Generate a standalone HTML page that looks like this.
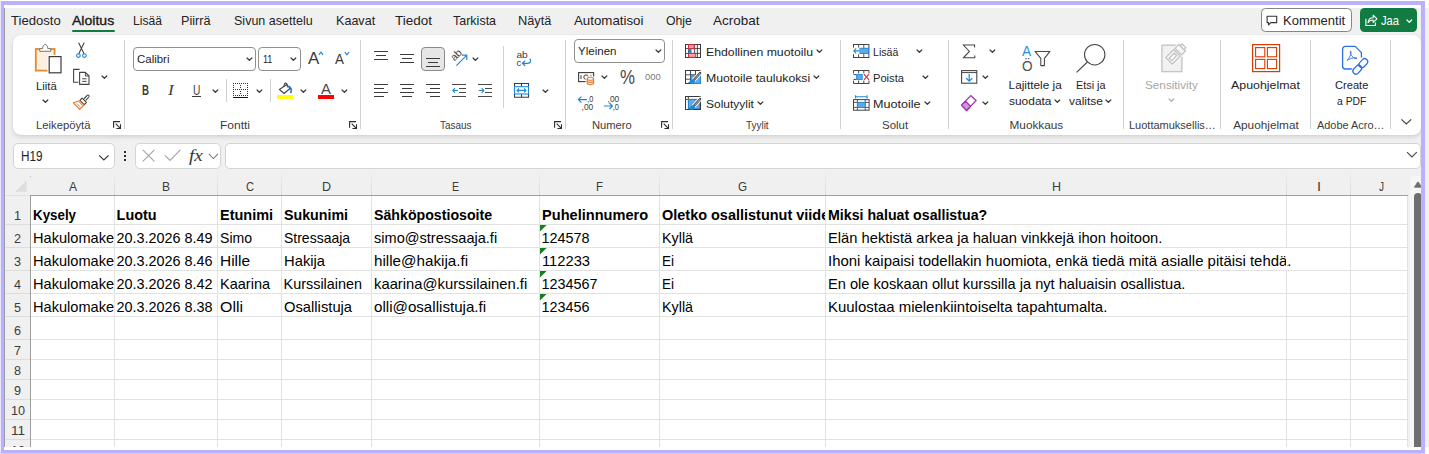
<!DOCTYPE html>
<html lang="fi"><head><meta charset="utf-8"><title>Excel</title>
<style>
html,body{margin:0;padding:0}
body{width:1429px;height:454px;overflow:hidden;background:#f0f0f0;position:relative;font-family:"Liberation Sans",sans-serif}
body div,body svg,body span{position:absolute}
.t{white-space:nowrap;transform-origin:0 0;display:block}
.i{overflow:visible}
</style></head><body>
<div style="left:0px;top:0px;width:1429px;height:8px;background:#fff"></div>
<div style="left:0px;top:447px;width:1429px;height:7px;background:#fff"></div>
<div style="left:0px;top:1px;width:1px;height:453px;background:#e9e6fd"></div>
<div style="left:4px;top:8px;width:1px;height:439px;background:#9c9ca6"></div>
<span class="t" style="left:10.60px;top:13px;font-size:13.3px;line-height:15px;color:#242424;transform:scaleX(0.9846);">Tiedosto</span>
<span class="t" style="left:72.20px;top:13px;font-size:13.3px;line-height:15px;color:#1b1b1b;transform:scaleX(1.0566);-webkit-text-stroke:0.35px #1b1b1b;">Aloitus</span>
<span class="t" style="left:133.00px;top:13px;font-size:13.3px;line-height:15px;color:#242424;transform:scaleX(0.9107);">Lisää</span>
<span class="t" style="left:181.00px;top:13px;font-size:13.3px;line-height:15px;color:#242424;transform:scaleX(0.9555);">Piirrä</span>
<span class="t" style="left:234.30px;top:13px;font-size:13.3px;line-height:15px;color:#242424;transform:scaleX(0.9417);">Sivun asettelu</span>
<span class="t" style="left:336.00px;top:13px;font-size:13.3px;line-height:15px;color:#242424;transform:scaleX(0.9455);">Kaavat</span>
<span class="t" style="left:395.40px;top:13px;font-size:13.3px;line-height:15px;color:#242424;transform:scaleX(1.0172);">Tiedot</span>
<span class="t" style="left:453.30px;top:13px;font-size:13.3px;line-height:15px;color:#242424;transform:scaleX(0.9403);">Tarkista</span>
<span class="t" style="left:518.00px;top:13px;font-size:13.3px;line-height:15px;color:#242424;transform:scaleX(0.9617);">Näytä</span>
<span class="t" style="left:574.00px;top:13px;font-size:13.3px;line-height:15px;color:#242424;">Automatisoi</span>
<span class="t" style="left:665.50px;top:13px;font-size:13.3px;line-height:15px;color:#242424;transform:scaleX(0.9214);">Ohje</span>
<span class="t" style="left:713.10px;top:13px;font-size:13.3px;line-height:15px;color:#242424;transform:scaleX(1.0126);">Acrobat</span>
<div style="left:72px;top:30px;width:42.5px;height:2px;background:#107c41;border-radius:1px"></div>
<div style="left:1261px;top:8px;width:91px;height:24px;background:#fff;border:1px solid #858585;border-radius:4.5px;box-sizing:border-box"></div>
<svg class="i" style="left:1266px;top:14.5px;" width="12" height="11" viewBox="0 0 12 11"><path d="M1.1 1.2 H10.7 V7.6 H4.8 L2.6 10 V7.6 H1.1 Z" fill="none" stroke="#333" stroke-width="1.1" stroke-linejoin="round"/></svg>
<span class="t" style="left:1282.80px;top:13px;font-size:13.3px;line-height:15px;color:#242424;transform:scaleX(0.9783);">Kommentit</span>
<div style="left:1360px;top:8px;width:57.2px;height:24px;background:#107c41;border-radius:4.5px"></div>
<svg class="i" style="left:1364.5px;top:13.5px;" width="13" height="12" viewBox="0 0 13 12"><path d="M0.9 4.8 V11.5 H10.4 V8.6" fill="none" stroke="#fff" stroke-width="1.1"/><path d="M3 8.6 C3.4 5.4 5.4 3.7 8.2 3.7 V1.2 L12 4.9 L8.2 8.4 V6 C5.8 6 4.2 6.8 3 8.6 Z" fill="none" stroke="#fff" stroke-width="1.05" stroke-linejoin="round"/></svg>
<span class="t" style="left:1381.30px;top:13px;font-size:13.3px;line-height:15px;color:#fff;transform:scaleX(0.8421);">Jaa</span>
<svg class="i" style="left:1406.4px;top:18.6px;" width="6.6" height="4.4" viewBox="0 0 6.6 4.4"><path d="M1 1 L3.3 3.4 L5.6 1" fill="none" stroke="#fff" stroke-width="1.3" stroke-linecap="round" stroke-linejoin="round"/></svg>
<div style="left:12.6px;top:35.3px;width:1408.6px;height:99.7px;background:#fff;border-radius:8px;box-shadow:0 2px 4px rgba(0,0,0,.13),0 0 1px rgba(0,0,0,.10)"></div>
<div style="left:124px;top:40px;width:1px;height:89px;background:#d1d1d1"></div>
<div style="left:360px;top:40px;width:1px;height:89px;background:#d1d1d1"></div>
<div style="left:565px;top:40px;width:1px;height:89px;background:#d1d1d1"></div>
<div style="left:672px;top:40px;width:1px;height:89px;background:#d1d1d1"></div>
<div style="left:840px;top:40px;width:1px;height:89px;background:#d1d1d1"></div>
<div style="left:948px;top:40px;width:1px;height:89px;background:#d1d1d1"></div>
<div style="left:1123px;top:40px;width:1px;height:89px;background:#d1d1d1"></div>
<div style="left:1220px;top:40px;width:1px;height:89px;background:#d1d1d1"></div>
<div style="left:1310px;top:40px;width:1px;height:89px;background:#d1d1d1"></div>
<div style="left:1390px;top:40px;width:1px;height:89px;background:#d1d1d1"></div>
<svg class="i" style="left:34px;top:43px;" width="29" height="32" viewBox="0 0 29 32"><rect x="1.8" y="6" width="18.8" height="21.6" fill="#fdf0e1" stroke="#e8892b" stroke-width="1.8"/>
<path d="M5.7 8.3 V5.6 H8.6 C8.6 3 9.8 1.5 11.2 1.5 C12.6 1.5 13.8 3 13.8 5.6 H16.7 V8.3 Z" fill="#fff" stroke="#777" stroke-width="1"/>
<rect x="13.4" y="11.8" width="15.4" height="19.8" fill="#fff"/>
<rect x="15.2" y="13.6" width="11.8" height="16.2" fill="#fff" stroke="#3b3b3b" stroke-width="1.2"/></svg>
<span class="t" style="left:35.80px;top:79px;font-size:11.8px;line-height:14px;color:#242424;transform:scaleX(0.9618);">Liitä</span>
<svg class="i" style="left:42.1px;top:99.35px;" width="6.8" height="4.3" viewBox="0 0 6.8 4.3"><path d="M1 1 L3.4 3.3 L5.8 1" fill="none" stroke="#3a3a3a" stroke-width="1.2" stroke-linecap="round" stroke-linejoin="round"/></svg>
<svg class="i" style="left:75px;top:42px;" width="13" height="18" viewBox="0 0 13 18"><path d="M3.8 1 L9 11.8 M9 1 L3.8 11.8" stroke="#444" stroke-width="1.1" fill="none" stroke-linecap="round"/><circle cx="3.4" cy="13.6" r="1.8" fill="none" stroke="#2188d8" stroke-width="1.1"/><circle cx="9.4" cy="13.6" r="1.8" fill="none" stroke="#2188d8" stroke-width="1.1"/></svg>
<svg class="i" style="left:72px;top:67px;" width="18" height="18" viewBox="0 0 18 18"><path d="M7.6 2.4 H1.6 V15.2 H6.4" fill="none" stroke="#444" stroke-width="1.1"/><path d="M7.6 5.4 H13.4 L17 9 V17.4 H7.6 Z" fill="#fff" stroke="#444" stroke-width="1.1" stroke-linejoin="round"/><path d="M13.4 5.4 V9 H17" fill="none" stroke="#444" stroke-width="1"/><path d="M10.2 11.8 H14.6 M10.2 14.4 H14.6" stroke="#444" stroke-width="1"/></svg>
<svg class="i" style="left:100.9px;top:75.25px;" width="6.8" height="4.3" viewBox="0 0 6.8 4.3"><path d="M1 1 L3.4 3.3 L5.8 1" fill="none" stroke="#3a3a3a" stroke-width="1.2" stroke-linecap="round" stroke-linejoin="round"/></svg>
<svg class="i" style="left:72px;top:93px;" width="19" height="18" viewBox="0 0 19 18"><path d="M11.8 6 L15.2 2.4 C16.2 1.4 17.8 2.8 16.8 4 L13.6 7.6" fill="#fff" stroke="#444" stroke-width="1.1"/><path d="M10 5.2 L14.4 9.4 L12.4 11.6 L8 7.4 Z" fill="#fff" stroke="#444" stroke-width="1.1" stroke-linejoin="round"/><path d="M7.6 7.8 L12 12 L7.6 16.4 L1.4 9.8 Z" fill="#fff" stroke="#e8772d" stroke-width="1.2" stroke-linejoin="round"/><path d="M4.6 10.4 L8.4 14.2 M7 8.8 L10.6 12.6" stroke="#e8772d" stroke-width="0.9"/></svg>
<span class="t" style="left:35.50px;top:118px;font-size:11.8px;line-height:14px;color:#3b3b3b;transform:scaleX(0.9547);">Leikepöytä</span>
<svg class="i" style="left:113px;top:121px;" width="9" height="9" viewBox="0 0 9 9"><path d="M0.6 6.7 V0.6 H7" fill="none" stroke="#2e2e2e" stroke-width="1.1"/><path d="M2.7 2.7 L7.3 7.3 M3.4 7.5 H7.5 V3.3" fill="none" stroke="#2e2e2e" stroke-width="1.1"/></svg>
<div style="left:133px;top:47px;width:123px;height:24px;background:#fff;border:1px solid #8f8f8f;border-radius:4px;box-sizing:border-box"></div>
<div style="left:258.3px;top:47px;width:42.6px;height:24px;background:#fff;border:1px solid #8f8f8f;border-radius:4px;box-sizing:border-box"></div>
<span class="t" style="left:137.20px;top:52px;font-size:11.8px;line-height:14px;color:#242424;transform:scaleX(0.9714);">Calibri</span>
<span class="t" style="left:262.60px;top:52px;font-size:11.8px;line-height:14px;color:#242424;transform:scaleX(0.7673);">11</span>
<svg class="i" style="left:245.7px;top:57.35px;" width="6.8" height="4.3" viewBox="0 0 6.8 4.3"><path d="M1 1 L3.4 3.3 L5.8 1" fill="none" stroke="#3a3a3a" stroke-width="1.2" stroke-linecap="round" stroke-linejoin="round"/></svg>
<svg class="i" style="left:290.4px;top:57.35px;" width="6.8" height="4.3" viewBox="0 0 6.8 4.3"><path d="M1 1 L3.4 3.3 L5.8 1" fill="none" stroke="#3a3a3a" stroke-width="1.2" stroke-linecap="round" stroke-linejoin="round"/></svg>
<span class="t" style="left:308.30px;top:48px;font-size:17.4px;line-height:20px;color:#3a3a3a;transform:scaleX(0.9720);">A</span>
<svg class="i" style="left:318.2px;top:51px;" width="6" height="5" viewBox="0 0 6 5"><path d="M0.8 3.9 L2.9 1.2 L5 3.9" fill="none" stroke="#2188d8" stroke-width="1.2"/></svg>
<span class="t" style="left:335.40px;top:52px;font-size:13.8px;line-height:15px;color:#3a3a3a;transform:scaleX(0.9730);">A</span>
<svg class="i" style="left:343.8px;top:51.2px;" width="6" height="5" viewBox="0 0 6 5"><path d="M0.8 1.2 L2.9 3.8 L5 1.2" fill="none" stroke="#2188d8" stroke-width="1.2"/></svg>
<span class="t" style="left:141.80px;top:82px;font-size:14.5px;line-height:16px;color:#3a3a3a;font-weight:700;transform:scaleX(0.6667);">B</span>
<span class="t" style="left:167.94px;top:81px;font-size:15.4px;line-height:17px;color:#3a3a3a;font-style:italic;font-family:'Liberation Serif',serif;transform:scaleX(1.1234);">I</span>
<span class="t" style="left:192.80px;top:82px;font-size:14px;line-height:16px;color:#444;transform:scaleX(0.7309);">U</span>
<div style="left:192px;top:96px;width:9px;height:1px;background:#3a3a3a"></div>
<svg class="i" style="left:211.8px;top:88.85px;" width="6.8" height="4.3" viewBox="0 0 6.8 4.3"><path d="M1 1 L3.4 3.3 L5.8 1" fill="none" stroke="#3a3a3a" stroke-width="1.2" stroke-linecap="round" stroke-linejoin="round"/></svg>
<div style="left:226.2px;top:79px;width:1px;height:23px;background:#d1d1d1"></div>
<svg class="i" style="left:233px;top:83px;" width="15" height="15" viewBox="0 0 15 15"><path d="M0 0.5 H15 M0 6.5 H15 M0 12.5 H15 M0.5 0 V13 M7.5 2 V5 M7.5 8 V11 M14.5 0 V13" fill="none" stroke="#333" stroke-width="1" stroke-dasharray="1 1"/><rect x="0" y="14" width="15" height="1" fill="#111"/></svg>
<svg class="i" style="left:255.8px;top:88.85px;" width="6.8" height="4.3" viewBox="0 0 6.8 4.3"><path d="M1 1 L3.4 3.3 L5.8 1" fill="none" stroke="#3a3a3a" stroke-width="1.2" stroke-linecap="round" stroke-linejoin="round"/></svg>
<div style="left:270.2px;top:79px;width:1px;height:23px;background:#d1d1d1"></div>
<svg class="i" style="left:277px;top:82px;" width="17" height="17" viewBox="0 0 17 17"><path d="M2.4 7.5 L9.8 2.5 L13 6.5 L7.1 11.5 Z" fill="#fff" stroke="#444" stroke-width="1.1" stroke-linejoin="round"/><path d="M7.1 4.9 C6.9 2.2 7.8 1 8.8 1.1 C10 1.3 10.4 3.4 10.3 5.4" fill="none" stroke="#444" stroke-width="1.1"/><path d="M11.8 4.6 C13.8 5.2 14.8 7.4 13.9 10.4" fill="none" stroke="#1e6fd0" stroke-width="1.6" stroke-linecap="round"/><rect x="0" y="13" width="16" height="3.8" fill="#ffff00"/></svg>
<svg class="i" style="left:299.8px;top:88.85px;" width="6.8" height="4.3" viewBox="0 0 6.8 4.3"><path d="M1 1 L3.4 3.3 L5.8 1" fill="none" stroke="#3a3a3a" stroke-width="1.2" stroke-linecap="round" stroke-linejoin="round"/></svg>
<span class="t" style="left:321.20px;top:80px;font-size:15.5px;line-height:17px;color:#4a4a4a;transform:scaleX(0.9639);">A</span>
<div style="left:318px;top:95px;width:16px;height:3.8px;background:#ff0000"></div>
<svg class="i" style="left:340.8px;top:88.85px;" width="6.8" height="4.3" viewBox="0 0 6.8 4.3"><path d="M1 1 L3.4 3.3 L5.8 1" fill="none" stroke="#3a3a3a" stroke-width="1.2" stroke-linecap="round" stroke-linejoin="round"/></svg>
<span class="t" style="left:219.60px;top:118px;font-size:11.8px;line-height:14px;color:#3b3b3b;transform:scaleX(1.0179);">Fontti</span>
<svg class="i" style="left:349px;top:121px;" width="9" height="9" viewBox="0 0 9 9"><path d="M0.6 6.7 V0.6 H7" fill="none" stroke="#2e2e2e" stroke-width="1.1"/><path d="M2.7 2.7 L7.3 7.3 M3.4 7.5 H7.5 V3.3" fill="none" stroke="#2e2e2e" stroke-width="1.1"/></svg>
<svg class="i" style="left:374px;top:51px;" width="14" height="20" viewBox="0 0 14 20"><path d="M0 0.5 H14" stroke="#3b3b3b" stroke-width="1"/><path d="M2 4.5 H12" stroke="#3b3b3b" stroke-width="1"/><path d="M0 8.5 H14" stroke="#3b3b3b" stroke-width="1"/></svg>
<svg class="i" style="left:400px;top:54px;" width="14" height="20" viewBox="0 0 14 20"><path d="M0 0.5 H14" stroke="#3b3b3b" stroke-width="1"/><path d="M2 4.5 H12" stroke="#3b3b3b" stroke-width="1"/><path d="M0 8.5 H14" stroke="#3b3b3b" stroke-width="1"/></svg>
<div style="left:421.2px;top:47px;width:23.6px;height:23.8px;background:#e6e6e6;border:1px solid #8a8a8a;border-radius:4px;box-sizing:border-box"></div>
<svg class="i" style="left:426px;top:58px;" width="14" height="20" viewBox="0 0 14 20"><path d="M0 0.5 H14" stroke="#3b3b3b" stroke-width="1"/><path d="M2 4.5 H12" stroke="#3b3b3b" stroke-width="1"/><path d="M0 8.5 H14" stroke="#3b3b3b" stroke-width="1"/></svg>
<svg class="i" style="left:450px;top:50px;" width="20" height="17" viewBox="0 0 20 17"><text x="0" y="0" font-family="Liberation Sans, sans-serif" font-size="10.4" fill="#3b3b3b" transform="translate(4.4,11.6) rotate(-45)">ab</text><path d="M6.4 15.6 L16.4 5.6 M12 5.2 H16.8 V10" fill="none" stroke="#2188d8" stroke-width="1.2"/></svg>
<svg class="i" style="left:472.2px;top:56.65px;" width="6.8" height="4.3" viewBox="0 0 6.8 4.3"><path d="M1 1 L3.4 3.3 L5.8 1" fill="none" stroke="#3a3a3a" stroke-width="1.2" stroke-linecap="round" stroke-linejoin="round"/></svg>
<svg class="i" style="left:374px;top:84px;" width="14" height="20" viewBox="0 0 14 20"><path d="M0 0.5 H14" stroke="#3b3b3b" stroke-width="1"/><path d="M0 4.5 H10" stroke="#3b3b3b" stroke-width="1"/><path d="M0 8.5 H14" stroke="#3b3b3b" stroke-width="1"/><path d="M0 12.5 H10" stroke="#3b3b3b" stroke-width="1"/></svg>
<svg class="i" style="left:400px;top:84px;" width="14" height="20" viewBox="0 0 14 20"><path d="M0 0.5 H14" stroke="#3b3b3b" stroke-width="1"/><path d="M2 4.5 H12" stroke="#3b3b3b" stroke-width="1"/><path d="M0 8.5 H14" stroke="#3b3b3b" stroke-width="1"/><path d="M2 12.5 H12" stroke="#3b3b3b" stroke-width="1"/></svg>
<svg class="i" style="left:426px;top:84px;" width="14" height="20" viewBox="0 0 14 20"><path d="M0 0.5 H14" stroke="#3b3b3b" stroke-width="1"/><path d="M4 4.5 H14" stroke="#3b3b3b" stroke-width="1"/><path d="M0 8.5 H14" stroke="#3b3b3b" stroke-width="1"/><path d="M4 12.5 H14" stroke="#3b3b3b" stroke-width="1"/></svg>
<svg class="i" style="left:452px;top:83px;" width="16" height="15" viewBox="0 0 16 15"><path d="M0 1.5 H14 M7 5.5 H14 M7 9.5 H14 M0 13.5 H14" stroke="#4a4a4a" stroke-width="1"/><path d="M6 7.5 H0.8 M3 5.2 L0.8 7.5 L3 9.8" fill="none" stroke="#2188d8" stroke-width="1.1"/></svg>
<svg class="i" style="left:478px;top:83px;" width="16" height="15" viewBox="0 0 16 15"><path d="M0 1.5 H14 M7 5.5 H14 M7 9.5 H14 M0 13.5 H14" stroke="#4a4a4a" stroke-width="1"/><path d="M0.6 7.5 H5.8 M3.6 5.2 L5.8 7.5 L3.6 9.8" fill="none" stroke="#2188d8" stroke-width="1.1"/></svg>
<div style="left:503.2px;top:46px;width:1px;height:61.6px;background:#d1d1d1"></div>
<svg class="i" style="left:515px;top:50px;" width="18" height="18" viewBox="0 0 18 18"><text x="1.4" y="8.3" font-family="Liberation Sans, sans-serif" font-size="9.6" fill="#3b3b3b" textLength="11.4" lengthAdjust="spacingAndGlyphs">ab</text><text x="1.4" y="15.6" font-family="Liberation Sans, sans-serif" font-size="9.6" fill="#3b3b3b">c</text><path d="M14.9 8.6 C16.6 11 15.4 13.3 12.6 13.3 H7.6 M10.2 10.6 L7.4 13.3 L10.2 16" fill="none" stroke="#2188d8" stroke-width="1.25"/></svg>
<svg class="i" style="left:514px;top:83px;" width="16" height="16" viewBox="0 0 16 16"><path d="M0.5 3.7 V0.5 H14.5 V3.7 M7.5 0.5 V3.7 M0.5 11 V14.2 H14.5 V11 M7.5 11 V14.2" fill="none" stroke="#3b3b3b" stroke-width="1.1"/><rect x="0.5" y="3.7" width="14" height="7.3" fill="#fff" stroke="#2188d8" stroke-width="1.1"/><path d="M3 7.4 H12 M5 5.4 L3 7.4 L5 9.4 M10 5.4 L12 7.4 L10 9.4" fill="none" stroke="#2188d8" stroke-width="1.1"/></svg>
<svg class="i" style="left:542.2px;top:88.85px;" width="6.8" height="4.3" viewBox="0 0 6.8 4.3"><path d="M1 1 L3.4 3.3 L5.8 1" fill="none" stroke="#3a3a3a" stroke-width="1.2" stroke-linecap="round" stroke-linejoin="round"/></svg>
<span class="t" style="left:439.70px;top:118px;font-size:11.8px;line-height:14px;color:#3b3b3b;transform:scaleX(0.8456);">Tasaus</span>
<svg class="i" style="left:554.3px;top:121px;" width="9" height="9" viewBox="0 0 9 9"><path d="M0.6 6.7 V0.6 H7" fill="none" stroke="#2e2e2e" stroke-width="1.1"/><path d="M2.7 2.7 L7.3 7.3 M3.4 7.5 H7.5 V3.3" fill="none" stroke="#2e2e2e" stroke-width="1.1"/></svg>
<div style="left:574.3px;top:39.3px;width:90.4px;height:23.6px;background:#fff;border:1px solid #8f8f8f;border-radius:4px;box-sizing:border-box"></div>
<span class="t" style="left:577.60px;top:44px;font-size:11.8px;line-height:14px;color:#242424;transform:scaleX(0.9783);">Yleinen</span>
<svg class="i" style="left:654.6px;top:49.45px;" width="6.8" height="4.3" viewBox="0 0 6.8 4.3"><path d="M1 1 L3.4 3.3 L5.8 1" fill="none" stroke="#3a3a3a" stroke-width="1.2" stroke-linecap="round" stroke-linejoin="round"/></svg>
<svg class="i" style="left:578px;top:72px;" width="17" height="14" viewBox="0 0 17 14"><rect x="0.6" y="0.6" width="15" height="9" fill="#fff" stroke="#3b3b3b" stroke-width="1.1"/><circle cx="8" cy="5.1" r="2.2" fill="none" stroke="#3b3b3b" stroke-width="1"/><path d="M3 3.2 V7 M13 3.2 V4.4" stroke="#3b3b3b" stroke-width="1"/><rect x="7.6" y="4.4" width="9.4" height="9.4" fill="#fff"/><path d="M9.2 6.8 V11 C9.2 13 15.6 13 15.6 11 V6.8" fill="#fff" stroke="#e8772d" stroke-width="1.1"/><path d="M9.2 9 C9.2 10.8 15.6 10.8 15.6 9" fill="none" stroke="#e8772d" stroke-width="1.1"/><ellipse cx="12.4" cy="6.8" rx="3.2" ry="1.5" fill="#fff" stroke="#e8772d" stroke-width="1.1"/></svg>
<svg class="i" style="left:601.3px;top:75.05px;" width="6.8" height="4.3" viewBox="0 0 6.8 4.3"><path d="M1 1 L3.4 3.3 L5.8 1" fill="none" stroke="#3a3a3a" stroke-width="1.2" stroke-linecap="round" stroke-linejoin="round"/></svg>
<span class="t" style="left:619.80px;top:66px;font-size:19.4px;line-height:22px;color:#484848;transform:scaleX(0.8696);">%</span>
<span class="t" style="left:645.00px;top:71px;font-size:9.4px;line-height:11px;color:#7a7a7a;transform:scaleX(1.0048);">000</span>
<svg class="i" style="left:577px;top:95px;" width="18" height="16" viewBox="0 0 18 16"><path d="M10 4.6 H1.4 M4.4 1.6 L1.4 4.6 L4.4 7.6" fill="none" stroke="#2188d8" stroke-width="1.2"/><text x="10.2" y="7.2" font-family="Liberation Sans, sans-serif" font-size="8.6" fill="#3b3b3b" lengthAdjust="spacingAndGlyphs" textLength="6.2">,0</text><text x="4.6" y="14.8" font-family="Liberation Sans, sans-serif" font-size="8.6" fill="#3b3b3b" lengthAdjust="spacingAndGlyphs" textLength="11.6">,00</text></svg>
<svg class="i" style="left:603px;top:95px;" width="18" height="16" viewBox="0 0 18 16"><text x="4.6" y="7.2" font-family="Liberation Sans, sans-serif" font-size="8.6" fill="#3b3b3b" lengthAdjust="spacingAndGlyphs" textLength="11.6">,00</text><path d="M0.8 11 H9.4 M6.4 8 L9.4 11 L6.4 14" fill="none" stroke="#2188d8" stroke-width="1.2"/><text x="9.8" y="14.8" font-family="Liberation Sans, sans-serif" font-size="8.6" fill="#3b3b3b" lengthAdjust="spacingAndGlyphs" textLength="6.2">,0</text></svg>
<span class="t" style="left:592.00px;top:118px;font-size:11.8px;line-height:14px;color:#3b3b3b;transform:scaleX(0.9485);">Numero</span>
<svg class="i" style="left:661px;top:121px;" width="9" height="9" viewBox="0 0 9 9"><path d="M0.6 6.7 V0.6 H7" fill="none" stroke="#2e2e2e" stroke-width="1.1"/><path d="M2.7 2.7 L7.3 7.3 M3.4 7.5 H7.5 V3.3" fill="none" stroke="#2e2e2e" stroke-width="1.1"/></svg>
<svg class="i" style="left:685px;top:44px;" width="16" height="14" viewBox="0 0 16 14"><rect x="0.5" y="0.5" width="15" height="13" fill="#fff" stroke="#3b3b3b" stroke-width="1"/><path d="M3.5 0.5 V13.5 M9.6 0.5 V13.5 M12.4 0.5 V13.5 M0.5 4.6 H15.5 M0.5 9.4 H15.5" stroke="#3b3b3b" stroke-width="0.9"/><rect x="3.5" y="0.7" width="5.6" height="3.9" fill="#f9a3ab" stroke="#e3202c" stroke-width="0.9"/><rect x="3.5" y="9.4" width="7.2" height="3.9" fill="#f9a3ab" stroke="#e3202c" stroke-width="0.9"/><rect x="3.6" y="4.8" width="3" height="4.4" fill="#2b8ae0"/></svg>
<svg class="i" style="left:685px;top:70px;" width="17" height="16" viewBox="0 0 17 16"><rect x="0.5" y="0.5" width="15" height="13" fill="#fff" stroke="#3b3b3b" stroke-width="1"/><path d="M5.5 0.5 V13.5 M10.5 0.5 V13.5 M0.5 4.8 H15.5 M0.5 9.2 H15.5" stroke="#3b3b3b" stroke-width="0.9"/><rect x="6" y="5.2" width="9.6" height="8.4" fill="#5aa9ea" stroke="#2188d8" stroke-width="0.8"/><path d="M15.4 2.8 L8.8 10" stroke="#fff" stroke-width="4.2" stroke-linecap="round"/><path d="M15.2 3 L9 9.8" stroke="#3b3b3b" stroke-width="2.3" stroke-linecap="round"/><path d="M14.9 3.4 L9.6 9.2" stroke="#fff" stroke-width="0.7" stroke-linecap="round"/><path d="M8.4 9 C6.2 8.8 5.6 11.4 3 12.6 C5.4 14.6 9.8 13.8 10.2 10.8 Z" fill="#2188d8"/></svg>
<svg class="i" style="left:685px;top:96px;" width="17" height="16" viewBox="0 0 17 16"><rect x="0.5" y="0.5" width="15" height="13" fill="#fff" stroke="#3b3b3b" stroke-width="1"/><path d="M0.5 3.4 H15.5 M3.4 0.5 V13.5" stroke="#3b3b3b" stroke-width="0.9"/><rect x="3.6" y="3.6" width="11" height="9" fill="#5aa9ea" stroke="#2188d8" stroke-width="0.8"/><path d="M15.4 2.8 L8.8 10" stroke="#fff" stroke-width="4.2" stroke-linecap="round"/><path d="M15.2 3 L9 9.8" stroke="#3b3b3b" stroke-width="2.3" stroke-linecap="round"/><path d="M14.9 3.4 L9.6 9.2" stroke="#fff" stroke-width="0.7" stroke-linecap="round"/><path d="M8.4 9 C6.2 8.8 5.6 11.4 3 12.6 C5.4 14.6 9.8 13.8 10.2 10.8 Z" fill="#2188d8"/></svg>
<span class="t" style="left:706.20px;top:45px;font-size:11.8px;line-height:14px;color:#242424;transform:scaleX(1.0390);">Ehdollinen muotoilu</span>
<svg class="i" style="left:815.9px;top:49.45px;" width="6.8" height="4.3" viewBox="0 0 6.8 4.3"><path d="M1 1 L3.4 3.3 L5.8 1" fill="none" stroke="#3a3a3a" stroke-width="1.2" stroke-linecap="round" stroke-linejoin="round"/></svg>
<span class="t" style="left:706.20px;top:71px;font-size:11.8px;line-height:14px;color:#242424;transform:scaleX(1.0383);">Muotoile taulukoksi</span>
<svg class="i" style="left:813.1px;top:75.45px;" width="6.8" height="4.3" viewBox="0 0 6.8 4.3"><path d="M1 1 L3.4 3.3 L5.8 1" fill="none" stroke="#3a3a3a" stroke-width="1.2" stroke-linecap="round" stroke-linejoin="round"/></svg>
<span class="t" style="left:706.00px;top:97px;font-size:11.8px;line-height:14px;color:#242424;transform:scaleX(1.0149);">Solutyylit</span>
<svg class="i" style="left:756.9px;top:101.45px;" width="6.8" height="4.3" viewBox="0 0 6.8 4.3"><path d="M1 1 L3.4 3.3 L5.8 1" fill="none" stroke="#3a3a3a" stroke-width="1.2" stroke-linecap="round" stroke-linejoin="round"/></svg>
<span class="t" style="left:746.00px;top:118px;font-size:11.8px;line-height:14px;color:#3b3b3b;transform:scaleX(0.8411);">Tyylit</span>
<svg class="i" style="left:853px;top:44px;" width="17" height="14" viewBox="0 0 17 14"><rect x="0.5" y="0.5" width="15.4" height="13" fill="#fff" stroke="#444" stroke-width="1"/><path d="M5.6 0.5 V13.5 M10.8 0.5 V13.5 M0.5 4.8 H16 M0.5 9.2 H16" stroke="#444" stroke-width="0.9"/><rect x="6.6" y="4.2" width="9" height="5.4" fill="#5aa9ea" stroke="#2188d8" stroke-width="0.8"/><rect x="0" y="3.6" width="6.4" height="6.6" fill="#fff"/><path d="M6.6 6.9 H0.8 M3.2 4.4 L0.8 6.9 L3.2 9.4" fill="none" stroke="#2188d8" stroke-width="1.1"/></svg>
<svg class="i" style="left:853px;top:70px;" width="17" height="14" viewBox="0 0 17 14"><path d="M0.5 0.5 H16 M0.5 13.5 H16 M0.5 0.5 V3.4 M5.6 0.5 V3.4 M10.8 0.5 V3.4 M16 0.5 V3.4 M0.5 10.6 V13.5 M5.6 10.6 V13.5 M10.8 10.6 V13.5 M16 10.6 V13.5 M0.5 4.6 H3 M0.5 9.4 H3" fill="none" stroke="#444" stroke-width="1"/><rect x="3.6" y="4.4" width="5.6" height="5.2" fill="#5aa9ea" stroke="#2188d8" stroke-width="0.9"/><path d="M11 4.2 L16 9.8 M16 4.2 L11 9.8" stroke="#e03030" stroke-width="1.2"/></svg>
<svg class="i" style="left:853px;top:95.4px;" width="17" height="16" viewBox="0 0 17 16"><path d="M2.6 1.8 H14 M2.6 0.2 V3.4 M14 0.2 V3.4" stroke="#2188d8" stroke-width="1.1" fill="none"/><rect x="0.5" y="4.6" width="15.6" height="10.6" fill="#fff" stroke="#444" stroke-width="1"/><path d="M4.4 4.6 V15.2 M12.2 4.6 V15.2 M0.5 7.4 H16 M0.5 12.4 H16" stroke="#444" stroke-width="0.9"/><rect x="4.4" y="7.4" width="7.8" height="5" fill="#5aa9ea" stroke="#2188d8" stroke-width="0.8"/></svg>
<span class="t" style="left:873.40px;top:45px;font-size:11.8px;line-height:14px;color:#242424;transform:scaleX(0.8960);">Lisää</span>
<svg class="i" style="left:915.9px;top:49.45px;" width="6.8" height="4.3" viewBox="0 0 6.8 4.3"><path d="M1 1 L3.4 3.3 L5.8 1" fill="none" stroke="#3a3a3a" stroke-width="1.2" stroke-linecap="round" stroke-linejoin="round"/></svg>
<span class="t" style="left:873.40px;top:71px;font-size:11.8px;line-height:14px;color:#242424;transform:scaleX(0.9435);">Poista</span>
<svg class="i" style="left:921.8px;top:75.45px;" width="6.8" height="4.3" viewBox="0 0 6.8 4.3"><path d="M1 1 L3.4 3.3 L5.8 1" fill="none" stroke="#3a3a3a" stroke-width="1.2" stroke-linecap="round" stroke-linejoin="round"/></svg>
<span class="t" style="left:873.40px;top:97px;font-size:11.8px;line-height:14px;color:#242424;transform:scaleX(1.0682);">Muotoile</span>
<svg class="i" style="left:924.0px;top:101.45px;" width="6.8" height="4.3" viewBox="0 0 6.8 4.3"><path d="M1 1 L3.4 3.3 L5.8 1" fill="none" stroke="#3a3a3a" stroke-width="1.2" stroke-linecap="round" stroke-linejoin="round"/></svg>
<span class="t" style="left:881.60px;top:118px;font-size:11.8px;line-height:14px;color:#3b3b3b;transform:scaleX(0.9720);">Solut</span>
<svg class="i" style="left:962px;top:43.6px;" width="15" height="15" viewBox="0 0 15 15"><path d="M12.6 3.4 V1 H1.4 L7.4 7.4 L1.4 13.8 H12.8 V11.4" fill="none" stroke="#444" stroke-width="1.05" stroke-linejoin="miter"/></svg>
<svg class="i" style="left:989.0px;top:49.45px;" width="6.8" height="4.3" viewBox="0 0 6.8 4.3"><path d="M1 1 L3.4 3.3 L5.8 1" fill="none" stroke="#3a3a3a" stroke-width="1.2" stroke-linecap="round" stroke-linejoin="round"/></svg>
<svg class="i" style="left:961px;top:70px;" width="17" height="14" viewBox="0 0 17 14"><rect x="0.6" y="0.6" width="15.2" height="12.6" fill="#fff" stroke="#444" stroke-width="1.1"/><path d="M0.6 2.6 H15.8" stroke="#444" stroke-width="1"/><path d="M8.2 4 V11 M5.2 8.2 L8.2 11.2 L11.2 8.2" fill="none" stroke="#2188d8" stroke-width="1.25"/></svg>
<svg class="i" style="left:981.9px;top:75.45px;" width="6.8" height="4.3" viewBox="0 0 6.8 4.3"><path d="M1 1 L3.4 3.3 L5.8 1" fill="none" stroke="#3a3a3a" stroke-width="1.2" stroke-linecap="round" stroke-linejoin="round"/></svg>
<svg class="i" style="left:960px;top:94px;" width="18" height="18" viewBox="0 0 18 18"><path d="M10.7 1.6 L16.1 6.6 L6.6 16.5 L1.5 11.1 Z" fill="#f8f8f8" stroke="#a535b5" stroke-width="1.3" stroke-linejoin="round"/><path d="M5.5 7.2 L10.5 12.3 L6.6 16.5 L1.5 11.1 Z" fill="#d592e0" stroke="#a535b5" stroke-width="1.3" stroke-linejoin="round"/></svg>
<svg class="i" style="left:981.9px;top:101.45px;" width="6.8" height="4.3" viewBox="0 0 6.8 4.3"><path d="M1 1 L3.4 3.3 L5.8 1" fill="none" stroke="#3a3a3a" stroke-width="1.2" stroke-linecap="round" stroke-linejoin="round"/></svg>
<span class="t" style="left:1022.00px;top:42px;font-size:15.4px;line-height:17px;color:#2b8fdf;transform:scaleX(0.8976);">A</span>
<span class="t" style="left:1022.00px;top:58px;font-size:14.8px;line-height:16px;color:#505050;transform:scaleX(0.9217);">Ö</span>
<svg class="i" style="left:1034px;top:50px;" width="17" height="17" viewBox="0 0 17 17"><path d="M1 1.4 H16 L10.4 8.4 V15.6 H6.8 V8.4 Z" fill="none" stroke="#444" stroke-width="1.05" stroke-linejoin="round"/></svg>
<span class="t" style="left:1008.60px;top:78px;font-size:11.8px;line-height:14px;color:#242424;">Lajittele ja</span>
<span class="t" style="left:1008.80px;top:94px;font-size:11.8px;line-height:14px;color:#242424;transform:scaleX(1.0125);">suodata</span>
<svg class="i" style="left:1053.9px;top:99.25px;" width="6.8" height="4.3" viewBox="0 0 6.8 4.3"><path d="M1 1 L3.4 3.3 L5.8 1" fill="none" stroke="#3a3a3a" stroke-width="1.2" stroke-linecap="round" stroke-linejoin="round"/></svg>
<svg class="i" style="left:1075px;top:42px;" width="32" height="32" viewBox="0 0 32 32"><circle cx="19.7" cy="12.7" r="10.2" fill="none" stroke="#444" stroke-width="1.05"/><path d="M12.4 20 L1.6 30.4" stroke="#444" stroke-width="1.1"/></svg>
<span class="t" style="left:1076.20px;top:78px;font-size:11.8px;line-height:14px;color:#242424;transform:scaleX(0.9183);">Etsi ja</span>
<span class="t" style="left:1068.90px;top:94px;font-size:11.8px;line-height:14px;color:#242424;transform:scaleX(1.0135);">valitse</span>
<svg class="i" style="left:1105.2px;top:99.25px;" width="6.8" height="4.3" viewBox="0 0 6.8 4.3"><path d="M1 1 L3.4 3.3 L5.8 1" fill="none" stroke="#3a3a3a" stroke-width="1.2" stroke-linecap="round" stroke-linejoin="round"/></svg>
<span class="t" style="left:1009.50px;top:118px;font-size:11.8px;line-height:14px;color:#3b3b3b;">Muokkaus</span>
<svg class="i" style="left:1159px;top:42px;" width="31" height="31" viewBox="0 0 31 31"><rect x="2.9" y="3.2" width="20" height="26.4" fill="#f1f1f1" stroke="#c6c6c6" stroke-width="1.4"/><g transform="translate(6.6,15.6) rotate(-45)" stroke="#c2c2c2" stroke-width="1.3"><rect x="-1.4" y="-1.4" width="24" height="12.2" fill="#fff" stroke="none"/><rect x="0" y="0" width="11.4" height="9.4" fill="#f6f6f6"/><rect x="2.2" y="3" width="7" height="3.4" fill="#fff"/><rect x="13.2" y="0" width="5.4" height="9.4" fill="#f6f6f6"/><rect x="18.6" y="2" width="2.6" height="5.4" fill="#fff"/></g></svg>
<span class="t" style="left:1145.00px;top:78px;font-size:11.8px;line-height:14px;color:#a6a6a6;transform:scaleX(0.9948);">Sensitivity</span>
<svg class="i" style="left:1168.0px;top:98.25px;" width="6.8" height="4.3" viewBox="0 0 6.8 4.3"><path d="M1 1 L3.4 3.3 L5.8 1" fill="none" stroke="#b0b0b0" stroke-width="1.2" stroke-linecap="round" stroke-linejoin="round"/></svg>
<span class="t" style="left:1128.90px;top:118px;font-size:11.8px;line-height:14px;color:#3b3b3b;transform:scaleX(0.9326);">Luottamuksellis…</span>
<svg class="i" style="left:1252px;top:44px;" width="29" height="29" viewBox="0 0 29 29"><rect x="0.6" y="0.6" width="27" height="27" fill="#fff" stroke="#d83b01" stroke-width="1.2"/><rect x="3.6" y="3.6" width="9.2" height="9.2" fill="none" stroke="#d83b01" stroke-width="1.1"/><rect x="15.4" y="3.6" width="9.2" height="9.2" fill="none" stroke="#d83b01" stroke-width="1.1"/><rect x="3.6" y="15.4" width="9.2" height="9.2" fill="none" stroke="#d83b01" stroke-width="1.1"/><rect x="15.4" y="15.4" width="9.2" height="9.2" fill="none" stroke="#d83b01" stroke-width="1.1"/></svg>
<span class="t" style="left:1231.00px;top:78px;font-size:11.8px;line-height:14px;color:#242424;transform:scaleX(1.0509);">Apuohjelmat</span>
<span class="t" style="left:1233.20px;top:118px;font-size:11.8px;line-height:14px;color:#3b3b3b;">Apuohjelmat</span>
<svg class="i" style="left:1340.6px;top:45.2px;" width="29" height="31" viewBox="0 0 29 31"><path d="M12.4 24 H4.4 C2.8 24 1.6 22.8 1.6 21.2 V4.2 C1.6 2.6 2.8 1.4 4.4 1.4 H14.2 L20.4 7.6 V12.4" fill="none" stroke="#2f6fe4" stroke-width="1.3" stroke-linejoin="round"/><path d="M6.2 15.4 C8.6 12.8 10.6 8.4 10 6.2 C9.2 5.4 8.6 7.8 10.6 10.8 C12.6 13.4 15.6 14.2 16 13.2 C15.6 12.2 9.6 12.8 6.2 15.4 Z" fill="none" stroke="#2f6fe4" stroke-width="0.9"/><g transform="translate(19.3,21.4) rotate(-47)" fill="none" stroke-linecap="round"><rect x="-9.4" y="-3" width="10" height="6" rx="3" stroke="#fff" stroke-width="3.4"/><rect x="-0.6" y="-3" width="10" height="6" rx="3" stroke="#fff" stroke-width="3.4"/><rect x="-9.4" y="-3" width="10" height="6" rx="3" stroke="#2f6fe4" stroke-width="1.3"/><rect x="-0.6" y="-3" width="10" height="6" rx="3" stroke="#2f6fe4" stroke-width="1.3"/></g></svg>
<span class="t" style="left:1334.80px;top:78px;font-size:11.8px;line-height:14px;color:#242424;transform:scaleX(0.9418);">Create</span>
<span class="t" style="left:1336.50px;top:94px;font-size:11.8px;line-height:14px;color:#242424;transform:scaleX(0.8812);">a PDF</span>
<span class="t" style="left:1316.50px;top:118px;font-size:11.8px;line-height:14px;color:#3b3b3b;transform:scaleX(0.9269);">Adobe Acro…</span>
<svg class="i" style="left:1400px;top:118px;" width="13" height="8" viewBox="0 0 13 8"><path d="M1.4 1.4 L6.3 6 L11.2 1.4" fill="none" stroke="#444" stroke-width="1.2"/></svg>
<div style="left:13px;top:143px;width:101.5px;height:26px;border:1px solid #d4d4d4;box-sizing:border-box;background:#fff;border-radius:5px"></div>
<span class="t" style="left:20.80px;top:148px;font-size:14.4px;line-height:16px;color:#242424;transform:scaleX(0.8152);">H19</span>
<svg class="i" style="left:98px;top:154px;" width="12" height="8" viewBox="0 0 12 8"><path d="M1.2 1.4 L5.9 6 L10.6 1.4" fill="none" stroke="#333" stroke-width="1.15"/></svg>
<div style="left:124px;top:151px;width:2px;height:2px;background:#2a2a2a"></div>
<div style="left:124px;top:155px;width:2px;height:2px;background:#2a2a2a"></div>
<div style="left:124px;top:159px;width:2px;height:2px;background:#2a2a2a"></div>
<div style="left:135px;top:143px;width:86px;height:26px;border:1px solid #d4d4d4;box-sizing:border-box;background:#fff;border-radius:5px"></div>
<svg class="i" style="left:141.5px;top:148.8px;" width="14" height="13" viewBox="0 0 14 13"><path d="M0.8 0.8 L12.4 12.4 M12.4 0.8 L0.8 12.4" stroke="#a3a3a3" stroke-width="1.1"/></svg>
<svg class="i" style="left:163.5px;top:148.8px;" width="18" height="13" viewBox="0 0 18 13"><path d="M0.9 6.4 L6 11.4 L16.4 0.8" fill="none" stroke="#a3a3a3" stroke-width="1.1"/></svg>
<span class="t" style="left:188.90px;top:146px;font-size:17px;line-height:19px;color:#333;font-style:italic;font-family:'Liberation Serif',serif;transform:scaleX(1.1265);">fx</span>
<svg class="i" style="left:208px;top:153.2px;" width="11" height="7" viewBox="0 0 11 7"><path d="M0.8 0.9 L5.4 5.6 L10 0.9" fill="none" stroke="#7a7a7a" stroke-width="1.05"/></svg>
<div style="left:225px;top:143px;width:1195.6px;height:26px;border:1px solid #d4d4d4;box-sizing:border-box;background:#fff;border-radius:5px"></div>
<svg class="i" style="left:1405.8px;top:150.8px;" width="12" height="8" viewBox="0 0 12 8"><path d="M1 1.2 L5.9 6 L10.8 1.2" fill="none" stroke="#444" stroke-width="1.1"/></svg>
<div style="left:31px;top:196px;width:1376px;height:251px;background:#fff"></div>
<div style="left:114px;top:196px;width:1px;height:251px;background:#e2e2e2"></div>
<div style="left:217px;top:196px;width:1px;height:251px;background:#e2e2e2"></div>
<div style="left:281px;top:196px;width:1px;height:251px;background:#e2e2e2"></div>
<div style="left:371px;top:196px;width:1px;height:251px;background:#e2e2e2"></div>
<div style="left:539px;top:196px;width:1px;height:251px;background:#e2e2e2"></div>
<div style="left:659px;top:196px;width:1px;height:251px;background:#e2e2e2"></div>
<div style="left:825px;top:196px;width:1px;height:251px;background:#e2e2e2"></div>
<div style="left:1286px;top:196px;width:1px;height:251px;background:#e2e2e2"></div>
<div style="left:1350px;top:196px;width:1px;height:251px;background:#e2e2e2"></div>
<div style="left:1407px;top:196px;width:1px;height:251px;background:#e2e2e2"></div>
<div style="left:31px;top:224px;width:1377px;height:1px;background:#e2e2e2"></div>
<div style="left:31px;top:247px;width:1377px;height:1px;background:#e2e2e2"></div>
<div style="left:31px;top:270px;width:1377px;height:1px;background:#e2e2e2"></div>
<div style="left:31px;top:293px;width:1377px;height:1px;background:#e2e2e2"></div>
<div style="left:31px;top:316px;width:1377px;height:1px;background:#e2e2e2"></div>
<div style="left:31px;top:339px;width:1377px;height:1px;background:#e2e2e2"></div>
<div style="left:31px;top:359px;width:1377px;height:1px;background:#e2e2e2"></div>
<div style="left:31px;top:379px;width:1377px;height:1px;background:#e2e2e2"></div>
<div style="left:31px;top:399px;width:1377px;height:1px;background:#e2e2e2"></div>
<div style="left:31px;top:419px;width:1377px;height:1px;background:#e2e2e2"></div>
<div style="left:31px;top:439px;width:1377px;height:1px;background:#e2e2e2"></div>
<div style="left:114px;top:175px;width:1px;height:20px;background:linear-gradient(#ececec,#d9d9d9)"></div>
<div style="left:217px;top:175px;width:1px;height:20px;background:linear-gradient(#ececec,#d9d9d9)"></div>
<div style="left:281px;top:175px;width:1px;height:20px;background:linear-gradient(#ececec,#d9d9d9)"></div>
<div style="left:371px;top:175px;width:1px;height:20px;background:linear-gradient(#ececec,#d9d9d9)"></div>
<div style="left:539px;top:175px;width:1px;height:20px;background:linear-gradient(#ececec,#d9d9d9)"></div>
<div style="left:659px;top:175px;width:1px;height:20px;background:linear-gradient(#ececec,#d9d9d9)"></div>
<div style="left:825px;top:175px;width:1px;height:20px;background:linear-gradient(#ececec,#d9d9d9)"></div>
<div style="left:1286px;top:175px;width:1px;height:20px;background:linear-gradient(#ececec,#d9d9d9)"></div>
<div style="left:1350px;top:175px;width:1px;height:20px;background:linear-gradient(#ececec,#d9d9d9)"></div>
<div style="left:5px;top:195px;width:25px;height:1px;background:#e2e2e2"></div>
<div style="left:30px;top:195px;width:1378px;height:1px;background:#9f9f9f"></div>
<div style="left:30px;top:196px;width:1px;height:251px;background:#9f9f9f"></div>
<div style="left:30px;top:176px;width:1px;height:1px;background:#bbb"></div>
<div style="left:5px;top:224px;width:25px;height:1px;background:#dcdcdc"></div>
<div style="left:5px;top:247px;width:25px;height:1px;background:#dcdcdc"></div>
<div style="left:5px;top:270px;width:25px;height:1px;background:#dcdcdc"></div>
<div style="left:5px;top:293px;width:25px;height:1px;background:#dcdcdc"></div>
<div style="left:5px;top:316px;width:25px;height:1px;background:#dcdcdc"></div>
<div style="left:5px;top:339px;width:25px;height:1px;background:#dcdcdc"></div>
<div style="left:5px;top:359px;width:25px;height:1px;background:#dcdcdc"></div>
<div style="left:5px;top:379px;width:25px;height:1px;background:#dcdcdc"></div>
<div style="left:5px;top:399px;width:25px;height:1px;background:#dcdcdc"></div>
<div style="left:5px;top:419px;width:25px;height:1px;background:#dcdcdc"></div>
<div style="left:5px;top:439px;width:25px;height:1px;background:#dcdcdc"></div>
<svg class="i" style="left:15px;top:180px;" width="12" height="12" viewBox="0 0 12 12"><path d="M11.7 0.3 V11.7 H0.3 Z" fill="#dedede"/></svg>
<span class="t" style="left:68.50px;top:179px;font-size:13.2px;line-height:15px;color:#3c3c3c;transform:scaleX(0.9139);">A</span>
<span class="t" style="left:162.00px;top:179px;font-size:13.2px;line-height:15px;color:#3c3c3c;transform:scaleX(0.9139);">B</span>
<span class="t" style="left:245.50px;top:179px;font-size:13.2px;line-height:15px;color:#3c3c3c;transform:scaleX(0.8440);">C</span>
<span class="t" style="left:322.00px;top:179px;font-size:13.2px;line-height:15px;color:#3c3c3c;transform:scaleX(0.9495);">D</span>
<span class="t" style="left:452.00px;top:179px;font-size:13.2px;line-height:15px;color:#3c3c3c;transform:scaleX(0.7996);">E</span>
<span class="t" style="left:596.00px;top:179px;font-size:13.2px;line-height:15px;color:#3c3c3c;transform:scaleX(0.8731);">F</span>
<span class="t" style="left:738.00px;top:179px;font-size:13.2px;line-height:15px;color:#3c3c3c;transform:scaleX(0.8816);">G</span>
<span class="t" style="left:1051.50px;top:179px;font-size:13.2px;line-height:15px;color:#3c3c3c;transform:scaleX(0.9495);">H</span>
<span class="t" style="left:1316.50px;top:179px;font-size:13.2px;line-height:15px;color:#3c3c3c;transform:scaleX(1.0969);">I</span>
<span class="t" style="left:1378.90px;top:179px;font-size:13.2px;line-height:15px;color:#3c3c3c;transform:scaleX(0.7619);">J</span>
<span class="t" style="left:14.30px;top:208px;font-size:13.2px;line-height:15px;color:#3c3c3c;transform:scaleX(0.9591);">1</span>
<span class="t" style="left:14.30px;top:231px;font-size:13.2px;line-height:15px;color:#3c3c3c;transform:scaleX(0.9591);">2</span>
<span class="t" style="left:14.30px;top:254px;font-size:13.2px;line-height:15px;color:#3c3c3c;transform:scaleX(0.9591);">3</span>
<span class="t" style="left:14.30px;top:277px;font-size:13.2px;line-height:15px;color:#3c3c3c;transform:scaleX(0.9591);">4</span>
<span class="t" style="left:14.30px;top:300px;font-size:13.2px;line-height:15px;color:#3c3c3c;transform:scaleX(0.9591);">5</span>
<span class="t" style="left:14.30px;top:323px;font-size:13.2px;line-height:15px;color:#3c3c3c;transform:scaleX(0.9591);">6</span>
<span class="t" style="left:14.30px;top:343px;font-size:13.2px;line-height:15px;color:#3c3c3c;transform:scaleX(0.9591);">7</span>
<span class="t" style="left:14.30px;top:363px;font-size:13.2px;line-height:15px;color:#3c3c3c;transform:scaleX(0.9591);">8</span>
<span class="t" style="left:14.30px;top:383px;font-size:13.2px;line-height:15px;color:#3c3c3c;transform:scaleX(0.9591);">9</span>
<span class="t" style="left:10.80px;top:403px;font-size:13.2px;line-height:15px;color:#3c3c3c;transform:scaleX(0.9591);">10</span>
<span class="t" style="left:10.80px;top:423px;font-size:13.2px;line-height:15px;color:#3c3c3c;transform:scaleX(1.0277);">11</span>
<span class="t" style="left:10.80px;top:443px;font-size:13.2px;line-height:15px;color:#3c3c3c;transform:scaleX(0.9591);">12</span>
<span class="t" style="left:32.60px;top:207px;font-size:14.4px;line-height:16px;color:#000;font-weight:700;transform:scaleX(0.9277);">Kysely</span>
<span class="t" style="left:116.60px;top:207px;font-size:14.4px;line-height:16px;color:#000;font-weight:700;">Luotu</span>
<span class="t" style="left:219.60px;top:207px;font-size:14.4px;line-height:16px;color:#000;font-weight:700;transform:scaleX(1.0056);">Etunimi</span>
<span class="t" style="left:283.60px;top:207px;font-size:14.4px;line-height:16px;color:#000;font-weight:700;transform:scaleX(0.9893);">Sukunimi</span>
<span class="t" style="left:373.60px;top:207px;font-size:14.4px;line-height:16px;color:#000;font-weight:700;transform:scaleX(0.9849);">Sähköpostiosoite</span>
<span class="t" style="left:541.60px;top:207px;font-size:14.4px;line-height:16px;color:#000;font-weight:700;transform:scaleX(1.0131);">Puhelinnumero</span>
<div style="left:660px;top:196px;width:165px;height:28px;overflow:hidden">
<span class="t" style="left:1.60px;top:11px;font-size:14.4px;line-height:16px;color:#000;font-weight:700;transform:scaleX(1.0053);">Oletko osallistunut viideltä</span>
</div>
<span class="t" style="left:827.60px;top:207px;font-size:14.4px;line-height:16px;color:#000;font-weight:700;transform:scaleX(0.9854);">Miksi haluat osallistua?</span>
<span class="t" style="left:32.60px;top:230px;font-size:14.4px;line-height:16px;color:#000;transform:scaleX(1.0138);">Hakulomake</span>
<span class="t" style="left:116.60px;top:230px;font-size:14.4px;line-height:16px;color:#000;">20.3.2026 8.49</span>
<span class="t" style="left:219.60px;top:230px;font-size:14.4px;line-height:16px;color:#000;transform:scaleX(0.9771);">Simo</span>
<span class="t" style="left:283.60px;top:230px;font-size:14.4px;line-height:16px;color:#000;transform:scaleX(0.9718);">Stressaaja</span>
<span class="t" style="left:373.60px;top:230px;font-size:14.4px;line-height:16px;color:#000;transform:scaleX(1.0112);">simo@stressaaja.fi</span>
<span class="t" style="left:541.60px;top:230px;font-size:14.4px;line-height:16px;color:#000;">124578</span>
<span class="t" style="left:661.60px;top:230px;font-size:14.4px;line-height:16px;color:#000;transform:scaleX(0.9950);">Kyllä</span>
<span class="t" style="left:827.60px;top:230px;font-size:14.4px;line-height:16px;color:#000;transform:scaleX(1.0219);">Elän hektistä arkea ja haluan vinkkejä ihon hoitoon.</span>
<svg class="i" style="left:540px;top:225px;" width="7" height="7" viewBox="0 0 7 7"><path d="M0 0 H6.6 L0 6.6 Z" fill="#13801f"/></svg>
<span class="t" style="left:32.60px;top:253px;font-size:14.4px;line-height:16px;color:#000;transform:scaleX(1.0138);">Hakulomake</span>
<span class="t" style="left:116.60px;top:253px;font-size:14.4px;line-height:16px;color:#000;">20.3.2026 8.46</span>
<span class="t" style="left:219.60px;top:253px;font-size:14.4px;line-height:16px;color:#000;transform:scaleX(1.0732);">Hille</span>
<span class="t" style="left:283.60px;top:253px;font-size:14.4px;line-height:16px;color:#000;transform:scaleX(1.0265);">Hakija</span>
<span class="t" style="left:373.60px;top:253px;font-size:14.4px;line-height:16px;color:#000;transform:scaleX(1.0574);">hille@hakija.fi</span>
<span class="t" style="left:541.60px;top:253px;font-size:14.4px;line-height:16px;color:#000;transform:scaleX(1.0235);">112233</span>
<span class="t" style="left:661.60px;top:253px;font-size:14.4px;line-height:16px;color:#000;transform:scaleX(0.9389);">Ei</span>
<span class="t" style="left:827.60px;top:253px;font-size:14.4px;line-height:16px;color:#000;transform:scaleX(1.0384);">Ihoni kaipaisi todellakin huomiota, enkä tiedä mitä asialle pitäisi tehdä.</span>
<svg class="i" style="left:540px;top:248px;" width="7" height="7" viewBox="0 0 7 7"><path d="M0 0 H6.6 L0 6.6 Z" fill="#13801f"/></svg>
<span class="t" style="left:32.60px;top:276px;font-size:14.4px;line-height:16px;color:#000;transform:scaleX(1.0138);">Hakulomake</span>
<span class="t" style="left:116.60px;top:276px;font-size:14.4px;line-height:16px;color:#000;">20.3.2026 8.42</span>
<span class="t" style="left:219.60px;top:276px;font-size:14.4px;line-height:16px;color:#000;transform:scaleX(1.0092);">Kaarina</span>
<span class="t" style="left:283.60px;top:276px;font-size:14.4px;line-height:16px;color:#000;">Kurssilainen</span>
<span class="t" style="left:373.60px;top:276px;font-size:14.4px;line-height:16px;color:#000;transform:scaleX(1.0281);">kaarina@kurssilainen.fi</span>
<span class="t" style="left:541.60px;top:276px;font-size:14.4px;line-height:16px;color:#000;">1234567</span>
<span class="t" style="left:661.60px;top:276px;font-size:14.4px;line-height:16px;color:#000;transform:scaleX(0.9389);">Ei</span>
<span class="t" style="left:827.60px;top:276px;font-size:14.4px;line-height:16px;color:#000;transform:scaleX(1.0155);">En ole koskaan ollut kurssilla ja nyt haluaisin osallistua.</span>
<svg class="i" style="left:540px;top:271px;" width="7" height="7" viewBox="0 0 7 7"><path d="M0 0 H6.6 L0 6.6 Z" fill="#13801f"/></svg>
<span class="t" style="left:32.60px;top:299px;font-size:14.4px;line-height:16px;color:#000;transform:scaleX(1.0138);">Hakulomake</span>
<span class="t" style="left:116.60px;top:299px;font-size:14.4px;line-height:16px;color:#000;">20.3.2026 8.38</span>
<span class="t" style="left:219.60px;top:299px;font-size:14.4px;line-height:16px;color:#000;transform:scaleX(1.1078);">Olli</span>
<span class="t" style="left:283.60px;top:299px;font-size:14.4px;line-height:16px;color:#000;transform:scaleX(1.0255);">Osallistuja</span>
<span class="t" style="left:373.60px;top:299px;font-size:14.4px;line-height:16px;color:#000;transform:scaleX(1.0520);">olli@osallistuja.fi</span>
<span class="t" style="left:541.60px;top:299px;font-size:14.4px;line-height:16px;color:#000;">123456</span>
<span class="t" style="left:661.60px;top:299px;font-size:14.4px;line-height:16px;color:#000;transform:scaleX(0.9950);">Kyllä</span>
<span class="t" style="left:827.60px;top:299px;font-size:14.4px;line-height:16px;color:#000;transform:scaleX(1.0392);">Kuulostaa mielenkiintoiselta tapahtumalta.</span>
<svg class="i" style="left:540px;top:294px;" width="7" height="7" viewBox="0 0 7 7"><path d="M0 0 H6.6 L0 6.6 Z" fill="#13801f"/></svg>
<div style="left:1286px;top:248px;width:1px;height:22px;background:#fff"></div>
<div style="left:1410px;top:176px;width:11.5px;height:271px;background:#f6f6f6;border-radius:5px 0 0 0"></div>
<svg class="i" style="left:1414px;top:181px;" width="8" height="7" viewBox="0 0 8 7"><path d="M0.4 6.2 L3.6 1.2 Q4 0.7 4.4 1.2 L7.6 6.2 Z" fill="#6e6e6e" stroke="#6e6e6e" stroke-width="0.8" stroke-linejoin="round"/></svg>
<div style="left:1414px;top:193px;width:8px;height:254px;background:#6e6e6e;border-radius:4px 4px 0 0"></div>
<div style="left:5px;top:447px;width:1420px;height:3px;background:#fff"></div>
<div style="left:1425px;top:447px;width:4px;height:7px;background:#fff"></div>
<div style="left:1px;top:1px;width:1424px;height:452px;box-sizing:border-box;border:4px solid #b9b1fb;border-left-width:3px;border-bottom-width:3px;pointer-events:none"></div>
<div style="left:0px;top:453px;width:1425px;height:1px;background:#d3cefb"></div>
</body></html>
